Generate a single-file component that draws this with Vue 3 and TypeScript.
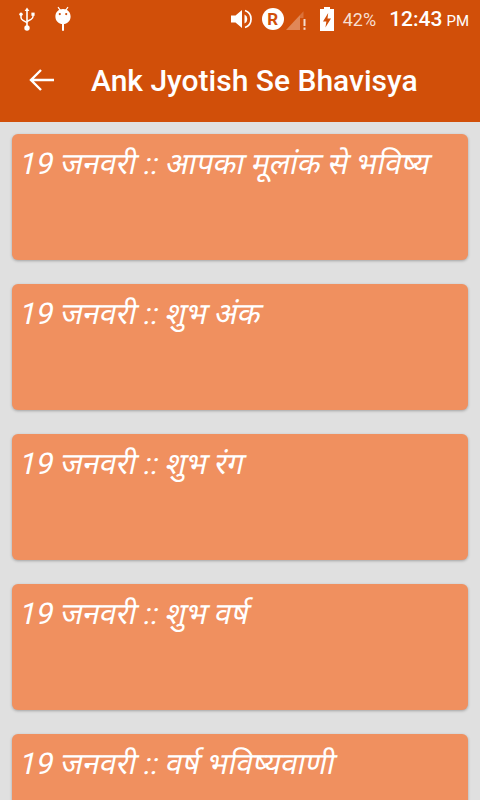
<script setup lang="ts">
const items: string[] = [
  '19 जनवरी :: आपका मूलांक से भविष्य',
  '19 जनवरी :: शुभ अंक',
  '19 जनवरी :: शुभ रंग',
  '19 जनवरी :: शुभ वर्ष',
  '19 जनवरी :: वर्ष भविष्यवाणी',
]
</script>

<template>
  <div class="page">
    <header class="appbar">
      <div class="status">
        <div class="status-left">
          <svg class="usb" width="18" height="24" viewBox="0 0 18 24" fill="none">
            <path d="M9 2.500V20" stroke="#fff" stroke-width="1.600"/>
            <path d="M9 0.500l2.400 3.400H6.600z" fill="#fff"/>
            <path d="M3 8v2.500c0 1.500 1 2.200 2 2.800l4 2.400" stroke="#fff" stroke-width="1.500"/>
            <path d="M15 8v1.500c0 1.500-1 2.200-2 2.800l-4 2.200" stroke="#fff" stroke-width="1.500"/>
            <circle cx="3" cy="7.200" r="1.700" fill="#fff"/>
            <rect x="13.400" y="5.600" width="3.200" height="3.200" fill="#fff"/>
            <circle cx="9" cy="21" r="2.700" fill="#fff"/>
          </svg>
          <svg class="droid" width="18" height="26" viewBox="0 0 18 26" fill="none">
            <path d="M4 1.200l2.400 3.200M14 1.200l-2.400 3.200" stroke="#fff" stroke-width="1.200"/>
            <path fill-rule="evenodd" d="M9 3c4.600 0 7.600 3.400 7.600 7.400S13.600 18 9 18s-7.600-3.600-7.600-7.600S4.400 3 9 3zM5.800 7a1.100 1.100 0 1 0 0 2.200 1.100 1.100 0 0 0 0-2.200zm6.400 0a1.100 1.100 0 1 0 0 2.200 1.100 1.100 0 0 0 0-2.200z" fill="#fff"/>
            <rect x="8" y="17" width="2" height="8" rx="1" fill="#fff"/>
          </svg>
        </div>
        <div class="status-right">
          <svg width="23" height="20" viewBox="0 0 23 20" fill="none">
            <path d="M0 6.500h4.500L11 1v18l-6.500-5.500H0z" fill="#fff"/>
            <path d="M13.500 5.500a5 5 0 0 1 0 9z" fill="#fff"/>
            <path d="M14 1.500a9 9 0 0 1 0 17" stroke="#fff" stroke-width="1.700"/>
          </svg>
          <span class="roam">R</span>
          <svg class="signal" width="21" height="24" viewBox="0 0 21 24" fill="none">
            <path d="M0 23L14 8v15z" fill="#fff" fill-opacity=".32"/>
            <path d="M14 8l3.500-3.700V11H14z" fill="#fff" fill-opacity=".2"/>
            <rect x="17.500" y="12" width="2" height="7" fill="#fff" fill-opacity=".8"/>
            <rect x="17.500" y="20.500" width="2" height="2.300" fill="#fff" fill-opacity=".8"/>
          </svg>
          <svg class="battery" width="14" height="24" viewBox="0 0 14 24">
            <path fill-rule="evenodd" d="M4 2V0h6v2h4v22H0V2zM8.200 6L3 14.500h3.400L5.400 20.500l5.600-9H7.500z" fill="#fff"/>
          </svg>
          <span class="pct">42%</span>
          <span class="clock">12:43<small>PM</small></span>
        </div>
      </div>
      <div class="toolbar">
        <svg class="back" width="28" height="24" viewBox="0 0 28 24" fill="none">
          <path d="M26 12H3M13 2L3 12l10 10" stroke="#fff" stroke-width="2.400"/>
        </svg>
        <h1>Ank Jyotish Se Bhavisya</h1>
      </div>
    </header>
    <main class="list">
      <article v-for="item in items" :key="item" class="card">
        <span class="card-text">{{ item }}</span>
      </article>
    </main>
  </div>
</template>

<style scoped>
.page {
  width: 480px;
  height: 800px;
  overflow: hidden;
  background: #e0e0e0;
  font-family: Roboto, "Noto Sans", "Noto Sans Devanagari", sans-serif;
}
.appbar {
  height: 122px;
  background: #d14f09;
  color: #fff;
}
.status {
  height: 38px;
  display: flex;
  justify-content: space-between;
  align-items: center;
}
.status-left {
  display: flex;
  align-items: center;
  gap: 18px;
  padding-left: 18px;
}
.status-right {
  display: flex;
  align-items: center;
  padding-right: 11px;
}
.roam {
  width: 22px;
  height: 22px;
  margin-left: 8px;
  border-radius: 50%;
  background: #fff;
  color: #d14f09;
  font-size: 17px;
  font-weight: 700;
  line-height: 22px;
  text-align: center;
}
.signal { margin-left: 2px; }
.battery { margin-left: 13px; }
.pct {
  margin-left: 9px;
  font-size: 18px;
  color: #f7dfd2;
}
.clock {
  margin-left: 13px;
  font-size: 21px;
  font-weight: 500;
}
.clock small {
  margin-left: 4px;
  font-size: 15px;
  font-weight: 400;
}
.toolbar {
  height: 84px;
  display: flex;
  align-items: center;
  padding-left: 28px;
}
h1 {
  margin: 0 0 0 35px;
  font-size: 30px;
  font-weight: 500;
  white-space: nowrap;
}
.list {
  display: flex;
  flex-direction: column;
  gap: 24px;
  padding: 12px 12px 0;
}
.card {
  flex: none;
  height: 126px;
  box-sizing: border-box;
  padding: 10px 4px;
  border-radius: 6px;
  background: #f0905f;
  box-shadow: 0 1px 3px rgba(0, 0, 0, 0.28);
  color: #fff;
  font-size: 30px;
  line-height: 40px;
  white-space: nowrap;
}
.card-text {
  display: inline-block;
  transform: skewX(-12deg);
  transform-origin: left bottom;
}
</style>
